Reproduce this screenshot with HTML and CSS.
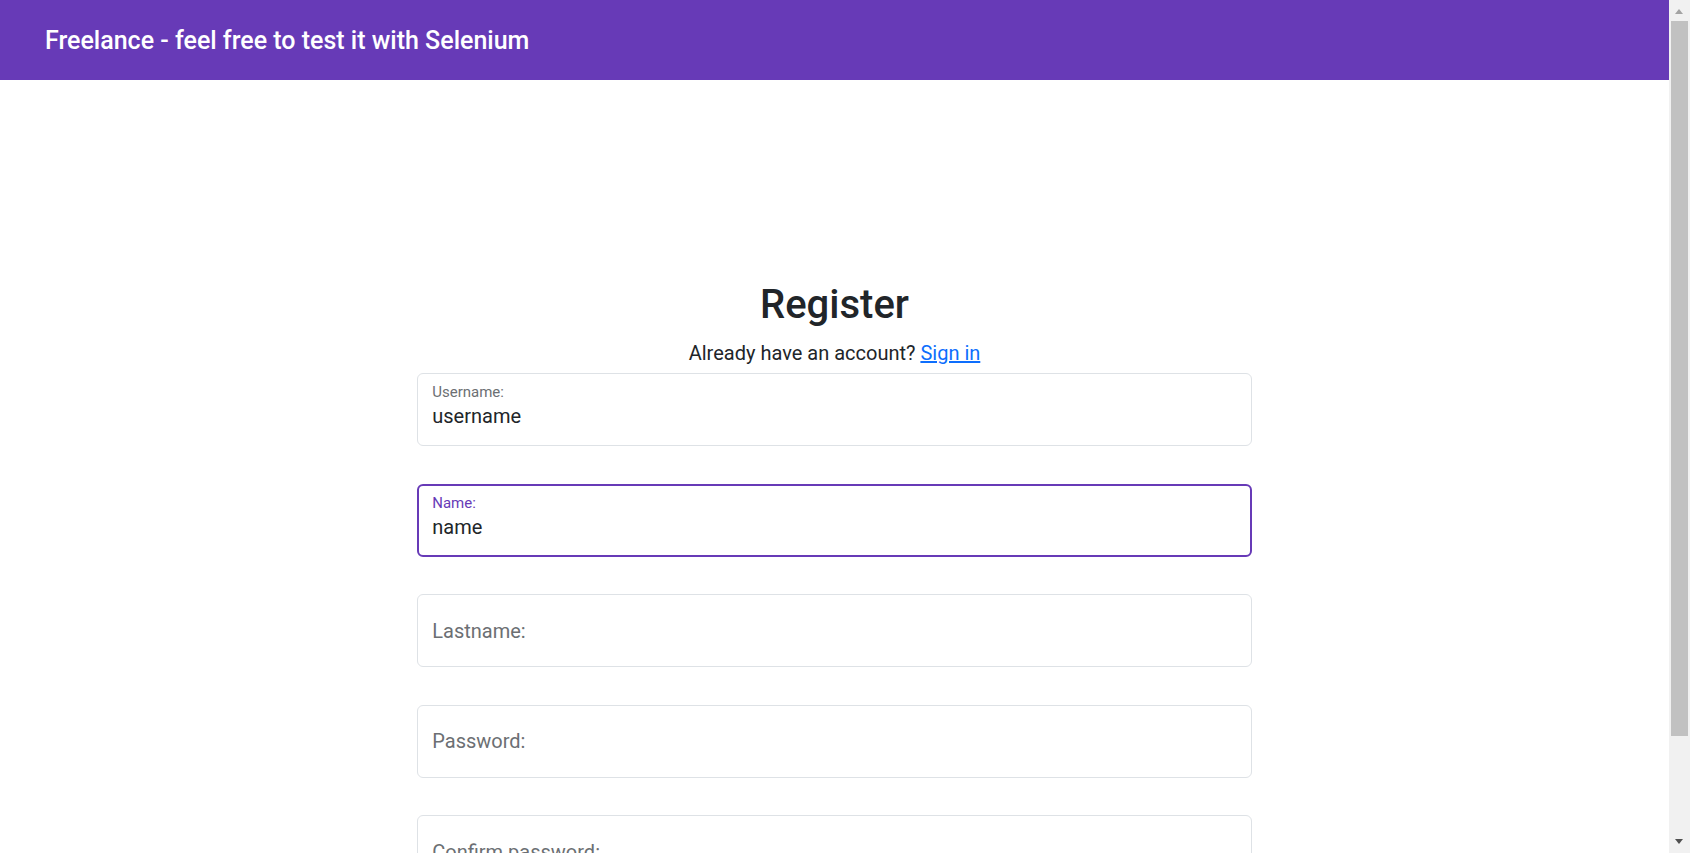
FILE: index.html
```html
<!DOCTYPE html>
<html lang="en">
<head>
<meta charset="utf-8">
<title>Freelance - Register</title>
<link rel="stylesheet" href="styles.css">
</head>
<body>
<header class="topbar">
  <span class="brand">Freelance - feel free to test it with Selenium</span>
</header>
<main class="page">
  <form class="register">
    <h1 class="title">Register</h1>
    <p class="subtitle">Already have an account? <a href="#" class="link">Sign in</a></p>
    <div class="field filled">
      <label class="flabel" for="username">Username:</label>
      <input class="finput" id="username" type="text" value="username">
    </div>
    <div class="field filled focused">
      <label class="flabel" for="name">Name:</label>
      <input class="finput" id="name" type="text" value="name">
    </div>
    <div class="field">
      <input class="finput" type="text" placeholder="Lastname:">
    </div>
    <div class="field">
      <input class="finput" type="password" placeholder="Password:">
    </div>
    <div class="field">
      <input class="finput" type="password" placeholder="Confirm password:">
    </div>
    <button class="submit" type="button">Register</button>
  </form>
</main>
<div class="scrollbar" aria-hidden="true">
  <span class="arrow up"></span>
  <span class="thumb"></span>
  <span class="arrow down"></span>
</div>
</body>
</html>
```

FILE: styles.css
```css
html, body {
  margin: 0;
  padding: 0;
}
body {
  font-family: Roboto, "Liberation Sans", sans-serif;
  color: #212529;
  background: #fff;
  margin-right: 21px;
}
.topbar {
  height: 80px;
  background: #673ab7;
  display: flex;
  align-items: center;
  padding-left: 45px;
}
.brand {
  color: #fff;
  font-size: 25px;
  font-weight: 500;
}
.page {
  padding-top: 201px;
  padding-bottom: 40px;
}
.register {
  width: 50%;
  margin: 0 auto;
  display: flex;
  flex-direction: column;
}
.title {
  margin: 0;
  text-align: center;
  font-size: 40px;
  font-weight: 500;
  line-height: 1.2;
}
.subtitle {
  margin: 9px 0 5px;
  text-align: center;
  font-size: 20px;
  line-height: 30px;
}
.link {
  color: #0d6efd;
}
.field {
  box-sizing: border-box;
  height: 73px;
  border: 1px solid #dee2e6;
  border-radius: 6px;
  padding: 0 14px;
  margin-bottom: 37.5px;
  display: flex;
  flex-direction: column;
  justify-content: center;
}
.field.filled {
  justify-content: flex-start;
  padding-top: 9px;
}
.field.focused {
  border: 2px solid #673ab7;
  padding: 8px 13px 0;
}
.flabel {
  font-size: 15px;
  line-height: 18px;
  color: #6c6f73;
}
.focused .flabel {
  color: #673ab7;
}
.finput {
  border: none;
  outline: none;
  padding: 0;
  margin: 0;
  font-family: Roboto, "Liberation Sans", sans-serif;
  font-size: 20px;
  line-height: 30px;
  height: 30px;
  color: #212529;
  background: transparent;
  width: 100%;
}
.finput::placeholder {
  color: #6c6f73;
}
.submit {
  height: 50px;
  border: none;
  border-radius: 6px;
  background: #673ab7;
  color: #fff;
  font-family: Roboto, "Liberation Sans", sans-serif;
  font-size: 20px;
}
.scrollbar {
  position: fixed;
  top: 0;
  right: 0;
  width: 21px;
  height: 100vh;
  background: #f1f1f1;
}
.thumb {
  position: absolute;
  left: 2px;
  top: 21px;
  width: 17px;
  height: 715px;
  background: #c1c1c1;
}
.arrow {
  position: absolute;
  left: 6px;
  width: 0;
  height: 0;
  border-left: 4.5px solid transparent;
  border-right: 4.5px solid transparent;
}
.arrow.up {
  top: 9px;
  border-bottom: 5px solid #a3a3a3;
}
.arrow.down {
  bottom: 9px;
  border-top: 5px solid #505050;
}
```
